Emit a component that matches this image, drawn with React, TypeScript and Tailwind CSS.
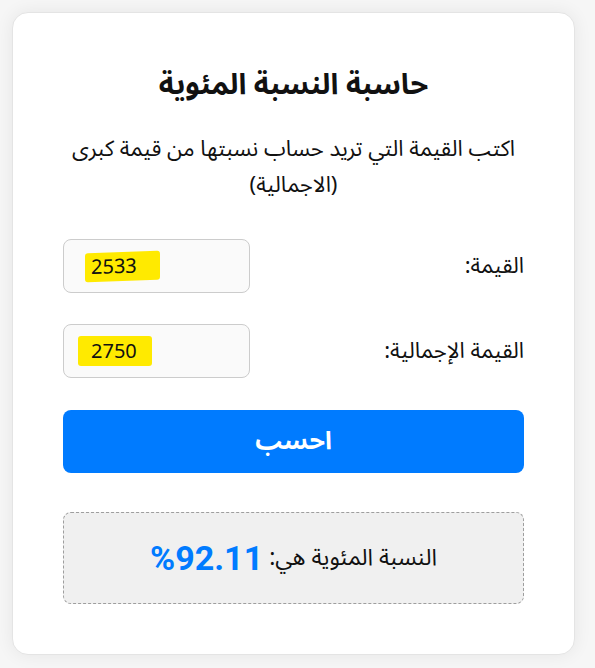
import React from "react";

export default function App() {
  const arabic = { fontFamily: '"Noto Sans Arabic", "DejaVu Sans", sans-serif' };
  return (
    <div className="w-[595px] h-[668px] bg-[#f6f6f6] pt-[12px] pl-[12px] overflow-hidden">
      <div
        dir="rtl"
        className="w-[563px] h-[643px] bg-white border border-[#e4e4e4] rounded-[16px] shadow-[0_0_18px_rgba(0,0,0,0.07)] px-[50px] pt-[51px] text-[#111]"
        style={arabic}
      >
        <h1 className="text-center text-[29px] font-bold leading-[42px]">حاسبة النسبة المئوية</h1>
        <p className="text-center text-[22px] leading-[36px] mt-[25px]">
          اكتب القيمة التي تريد حساب نسبتها من قيمة كبرى (الاجمالية)
        </p>

        <div className="mt-[36px] flex items-center justify-between">
          <label className="text-[22px]">القيمة:</label>
          <div dir="ltr" className="w-[187px] h-[54px] rounded-[8px] border border-[#cccccc] bg-[#fafafa] flex items-center pl-[21px]">
            <span
              className="bg-[#ffea00] px-[6px] pt-[2px] pb-[3px] text-[20px] leading-[24px] rounded-[3px] -skew-y-2 w-[75px]"
              style={{ fontFamily: '"Noto Sans", "Open Sans", sans-serif' }}
            >
              2533
            </span>
          </div>
        </div>

        <div className="mt-[31px] flex items-center justify-between">
          <label className="text-[22px]">القيمة الإجمالية:</label>
          <div dir="ltr" className="w-[187px] h-[54px] rounded-[8px] border border-[#cccccc] bg-[#fafafa] flex items-center pl-[14px]">
            <span
              className="bg-[#ffea00] pl-[13px] pr-[8px] pt-[3px] pb-[3px] text-[20px] leading-[24px] rounded-[3px] w-[74px]"
              style={{ fontFamily: '"Noto Sans", "Open Sans", sans-serif' }}
            >
              2750
            </span>
          </div>
        </div>

        <button className="mt-[32px] w-full h-[63px] rounded-[8px] bg-[#007bff] text-white text-[25px] font-bold">
          احسب
        </button>

        <div className="mt-[39px] w-full h-[92px] rounded-[8px] border border-dashed border-[#9e9e9e] bg-[#f0f0f0] flex items-center justify-center gap-[6px]">
          <span className="text-[23px]">النسبة المئوية هي:</span>
          <span
            dir="ltr"
            className="text-[34px] font-bold text-[#007bff] leading-[40px]"
            style={{ fontFamily: 'Roboto, "Liberation Sans", sans-serif' }}
          >
            %92.11
          </span>
        </div>
      </div>
    </div>
  );
}
